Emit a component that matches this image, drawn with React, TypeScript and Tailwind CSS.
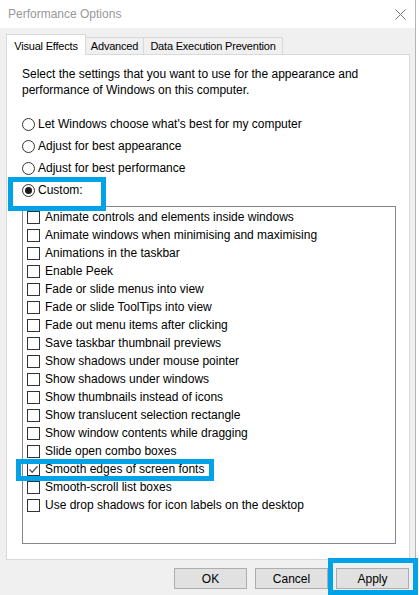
import React from 'react';

const effects = [
  { label: 'Animate controls and elements inside windows', checked: false },
  { label: 'Animate windows when minimising and maximising', checked: false },
  { label: 'Animations in the taskbar', checked: false },
  { label: 'Enable Peek', checked: false },
  { label: 'Fade or slide menus into view', checked: false },
  { label: 'Fade or slide ToolTips into view', checked: false },
  { label: 'Fade out menu items after clicking', checked: false },
  { label: 'Save taskbar thumbnail previews', checked: false },
  { label: 'Show shadows under mouse pointer', checked: false },
  { label: 'Show shadows under windows', checked: false },
  { label: 'Show thumbnails instead of icons', checked: false },
  { label: 'Show translucent selection rectangle', checked: false },
  { label: 'Show window contents while dragging', checked: false },
  { label: 'Slide open combo boxes', checked: false },
  { label: 'Smooth edges of screen fonts', checked: true },
  { label: 'Smooth-scroll list boxes', checked: false },
  { label: 'Use drop shadows for icon labels on the desktop', checked: false },
];

const options = [
  { label: "Let Windows choose what's best for my computer", selected: false },
  { label: 'Adjust for best appearance', selected: false },
  { label: 'Adjust for best performance', selected: false },
  { label: 'Custom:', selected: true },
];

function Radio({ selected }: { selected: boolean }) {
  return (
    <span className="flex h-[13px] w-[13px] shrink-0 items-center justify-center rounded-full border border-[#333333] bg-white">
      {selected && <span className="h-[7px] w-[7px] rounded-full bg-[#1a1a1a]" />}
    </span>
  );
}

function Checkbox({ checked }: { checked: boolean }) {
  return (
    <span className="flex h-[13px] w-[13px] shrink-0 items-center justify-center border border-[#333333] bg-white">
      {checked && (
        <svg width="11" height="11" viewBox="0 0 11 11">
          <path d="M1.5 5.5 L4.2 8.3 L9.5 2.2" fill="none" stroke="#555555" strokeWidth="1.3" />
        </svg>
      )}
    </span>
  );
}

function Button({ label }: { label: string }) {
  return (
    <button className="flex h-[21px] w-[73px] items-center justify-center border border-[#adadad] bg-[#e1e1e1] text-[12px] text-black">
      {label}
    </button>
  );
}

export default function App() {
  return (
    <div
      className="relative flex h-[595px] w-[419px] overflow-hidden bg-white text-[12px] text-black"
      style={{ fontFamily: '"Liberation Sans", Arial, sans-serif' }}
    >
      <div className="flex w-[416px] flex-col border-r border-[#b4b4b4] bg-[#f0f0f0]">
        {/* Title bar */}
        <div className="flex h-[28px] shrink-0 items-center justify-between bg-white pl-[8px] pr-[9px]">
          <span className="text-[12px] text-[#999999]">Performance Options</span>
          <svg width="11" height="11" viewBox="0 0 11 11">
            <path d="M0.5 0.5 L10.5 10.5 M10.5 0.5 L0.5 10.5" stroke="#777777" strokeWidth="1" />
          </svg>
        </div>

        {/* Tabs */}
        <div className="mt-[6px] flex h-[20px] items-end pl-[6px] text-[11px] tracking-[-0.2px]">
          <div className="relative z-10 -mb-px flex h-[21px] w-[80px] items-start justify-center border border-b-0 border-[#d9d9d9] bg-white pt-[3px]">
            Visual Effects
          </div>
          <div className="flex h-[17px] w-[58px] items-center justify-center border border-b-0 border-l-0 border-[#d9d9d9] bg-[#f0f0f0]">
            Advanced
          </div>
          <div className="flex h-[17px] w-[139px] items-center justify-center border border-b-0 border-l-0 border-[#d9d9d9] bg-[#f0f0f0]">
            Data Execution Prevention
          </div>
        </div>

        {/* Panel */}
        <div className="ml-[6px] flex h-[506px] w-[404px] flex-col border border-[#d9d9d9] bg-white pl-[15px] pt-[11px]">
          <p className="w-[360px] leading-[16px]">
            Select the settings that you want to use for the appearance and performance of Windows on this computer.
          </p>

          <div className="mt-[15px] flex flex-col">
            {options.map((o) => (
              <div key={o.label} className="flex h-[22px] items-center gap-[3px]">
                <Radio selected={o.selected} />
                <span>{o.label}</span>
              </div>
            ))}
          </div>

          <div className="mt-[5px] h-[338px] w-[374px] border border-[#828790] bg-white pl-[4px] pt-[1px]">
            {effects.map((e) => (
              <div key={e.label} className="flex h-[18px] items-center gap-[5px]">
                <Checkbox checked={e.checked} />
                <span>{e.label}</span>
              </div>
            ))}
          </div>
        </div>

        {/* Buttons */}
        <div className="mt-[8px] flex justify-end gap-[8px] pr-[6px]">
          <Button label="OK" />
          <Button label="Cancel" />
          <Button label="Apply" />
        </div>
      </div>

      {/* Annotation highlights */}
      <div className="pointer-events-none absolute left-[8px] top-[177px] h-[34px] w-[98px] border-[5px] border-[#00a2e8]" />
      <div className="pointer-events-none absolute left-[16px] top-[459px] h-[22px] w-[198px] border-[5px] border-[#00a2e8]" />
      <div className="pointer-events-none absolute left-[328px] top-[558px] h-[37px] w-[90px] border-[5px] border-[#00a2e8]" />
    </div>
  );
}
